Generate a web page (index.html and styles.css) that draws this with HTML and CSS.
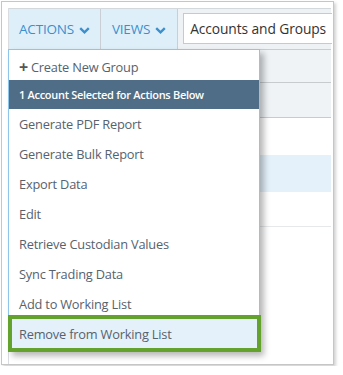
FILE: index.html
```html
<!DOCTYPE html>
<html lang="en">
<head>
  <meta charset="UTF-8">
  <meta name="viewport" content="width=device-width, initial-scale=1.0">
  <title>Actions Menu</title>
  <link rel="stylesheet" href="styles.css">
</head>
<body>
  <div class="frame">
    <div class="app">
      <div class="toolbar">
        <button class="tb-btn">ACTIONS
          <svg class="chev" width="11" height="7" viewBox="0 0 11 7"><path d="M1.2 1.2 L5.5 5.3 L9.8 1.2" fill="none" stroke="currentColor" stroke-width="2.4"/></svg>
        </button>
        <button class="tb-btn views">VIEWS
          <svg class="chev" width="11" height="7" viewBox="0 0 11 7"><path d="M1.2 1.2 L5.5 5.3 L9.8 1.2" fill="none" stroke="currentColor" stroke-width="2.4"/></svg>
        </button>
        <div class="search">
          <div class="search-box">Accounts and Groups</div>
        </div>
      </div>

      <div class="grid">
        <div class="row head"></div>
        <div class="row head"></div>
        <div class="row"></div>
        <div class="row selected"></div>
        <div class="row"></div>
        <div class="row"></div>
      </div>

      <ul class="menu">
        <li class="item create"><span class="plus">+</span>Create New Group</li>
        <li class="menu-head">1 Account Selected for Actions Below</li>
        <li class="item">Generate PDF Report</li>
        <li class="item">Generate Bulk Report</li>
        <li class="item">Export Data</li>
        <li class="item">Edit</li>
        <li class="item">Retrieve Custodian Values</li>
        <li class="item">Sync Trading Data</li>
        <li class="item">Add to Working List</li>
        <li class="item highlight">Remove from Working List</li>
      </ul>
    </div>
  </div>
</body>
</html>
```

FILE: styles.css
```css
body {
  margin: 0;
  font-family: "Open Sans", "Noto Sans", sans-serif;
  background: #fff;
}
.frame {
  margin: 1px;
  width: 333px;
  height: 364px;
  border: 1px solid #c6c6c6;
  box-shadow: 2px 2px 3px rgba(0, 0, 0, 0.18);
  padding: 6px 0 0 6px;
  box-sizing: border-box;
  overflow: hidden;
  background: #fff;
}
.app {
  position: relative;
  width: 323px;
  height: 400px;
  border-left: 1px solid #d9dde1;
  box-sizing: border-box;
}
.toolbar {
  display: flex;
  height: 42px;
  border-top: 1px solid #d3d8dc;
  border-bottom: 1px solid #c9cdd1;
  box-sizing: border-box;
  background: #eff2f5;
}
.tb-btn {
  display: flex;
  align-items: center;
  gap: 5px;
  height: 100%;
  padding: 0 10px 0 10px;
  border: none;
  border-right: 1px solid #c9cfd4;
  background: #dfeff9;
  color: #3b8fcd;
  font-family: inherit;
  font-size: 13.5px;
  letter-spacing: -0.2px;
  cursor: pointer;
}
.tb-btn.views {
  padding: 0 11px 0 11px;
}
.chev {
  margin-top: 2px;
}
.search {
  flex: 1;
  padding: 4px 0 5px 5px;
}
.search-box {
  height: 100%;
  box-sizing: border-box;
  border: 1px solid #c6cacd;
  border-right: none;
  background: #fff;
  color: #333;
  font-size: 13.8px;
  letter-spacing: -0.1px;
  padding: 0 6px;
  display: flex;
  align-items: center;
  white-space: nowrap;
}
.row {
  height: 36px;
  border-bottom: 1px solid #fff;
}
.row.head {
  height: 32px;
  background: #eff3f6;
  border-bottom: 1px solid #c8cbce;
}
.row.head + .row.head {
  height: 34px;
}
.row.selected {
  height: 37px;
  background: #e4f1fa;
  border-bottom: none;
}
.row:nth-child(5) {
  border-bottom: 1px solid #e6e8ea;
  height: 34px;
}
.menu {
  position: absolute;
  left: -1px;
  top: 41px;
  width: 252px;
  margin: 0;
  padding: 0;
  list-style: none;
  background: #fff;
  border: 1px solid #8ec5ea;
  border-bottom: none;
  box-sizing: border-box;
  box-shadow: 4px 4px 6px rgba(0, 0, 0, 0.28);
}
.item {
  height: 30px;
  display: flex;
  align-items: center;
  padding-left: 10px;
  color: #56626e;
  font-size: 12.8px;
  letter-spacing: -0.2px;
}
.item.create {
  height: 30px;
  padding-top: 3px;
  box-sizing: border-box;
}
.plus {
  font-weight: 700;
  font-size: 16px;
  color: #555;
  margin-right: 3px;
}
.menu-head {
  height: 29px;
  display: flex;
  align-items: center;
  padding-left: 10px;
  background: #506d87;
  color: #fff;
  font-weight: 600;
  font-size: 11px;
  letter-spacing: -0.3px;
}
.item.highlight {
  height: 37px;
  margin: -4px -2px 0 -1px;
  padding-left: 7px;
  border: 4px solid #62a22d;
  box-sizing: border-box;
  background: #e4f1fa;
}
```
